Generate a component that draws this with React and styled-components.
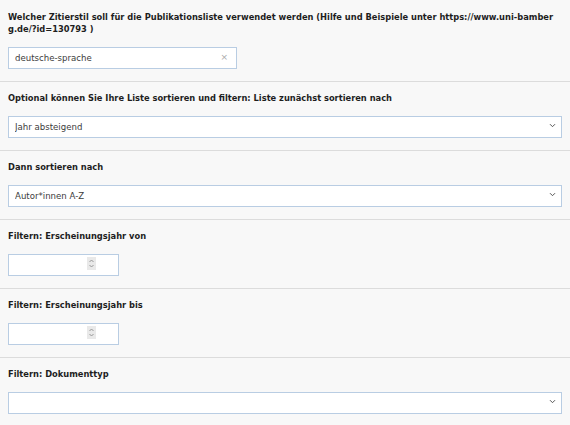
import React from "react"
import styled, { createGlobalStyle } from "styled-components"

const GlobalStyle = createGlobalStyle`
  html, body {
    margin: 0;
    padding: 0;
    background: #f8f8f8;
  }
  body {
    font-family: "DejaVu Sans", Verdana, sans-serif;
    color: #333;
  }
`

const Form = styled.div`
  width: 570px;
  background: #f8f8f8;
`

const Section = styled.div`
  padding: 10px 8px 13px;
  border-bottom: 1px solid #dcdcdc;

  &:first-child {
    padding-top: 11px;
  }

  &:last-child {
    border-bottom: none;
  }
`

const Label = styled.div`
  font-size: 8.3px;
  font-weight: bold;
  line-height: 12px;
  color: #1e1e1e;
  margin-bottom: 11px;
  word-break: break-all;
`

const FieldWrap = styled.div`
  position: relative;
  width: ${({ $width }) => $width || "100%"};
  height: 22px;
  box-sizing: border-box;
`

const Field = styled.input`
  box-sizing: border-box;
  width: 100%;
  height: 22px;
  border: 1px solid #b9cde3;
  background: #fff;
  font-family: "DejaVu Sans", Verdana, sans-serif;
  font-size: 8.6px;
  color: #3c3c3c;
  padding: 0 22px 0 6px;
  margin: 0;
  outline: none;
  border-radius: 0;
  appearance: none;
  -moz-appearance: textfield;

  &::-webkit-inner-spin-button,
  &::-webkit-outer-spin-button {
    -webkit-appearance: none;
    margin: 0;
  }
`

const Select = styled.select`
  box-sizing: border-box;
  width: 100%;
  height: 22px;
  border: 1px solid #b9cde3;
  background: #fff;
  font-family: "DejaVu Sans", Verdana, sans-serif;
  font-size: 8.6px;
  color: #3c3c3c;
  padding: 0 22px 0 6px;
  margin: 0;
  outline: none;
  border-radius: 0;
  appearance: none;
`

const Clear = styled.span`
  position: absolute;
  right: 9px;
  top: 50%;
  transform: translateY(-50%);
  color: #aaa;
  font-size: 9px;
  line-height: 1;
`

const Chevron = styled.svg`
  position: absolute;
  right: 6px;
  top: 50%;
  margin-top: -3px;
  width: 7px;
  height: 5px;
  pointer-events: none;
`

const Spinner = styled.span`
  position: absolute;
  left: 79px;
  top: 4px;
  width: 9px;
  height: 13px;
  background: #e9e9e9;
  display: flex;
  align-items: center;
  justify-content: center;
`

const ChevronDown = () => (
  <Chevron viewBox="0 0 7 5">
    <path d="M1 1.2 L3.5 3.7 L6 1.2" fill="none" stroke="#555" strokeWidth="1" />
  </Chevron>
)

const NumberField = () => (
  <FieldWrap $width="111px">
    <Field type="number" />
    <Spinner>
      <svg width="7" height="11" viewBox="0 0 7 11">
        <path d="M1.5 4 L3.5 2 L5.5 4" fill="none" stroke="#8e8e8e" strokeWidth="0.9" />
        <path d="M1.5 7 L3.5 9 L5.5 7" fill="none" stroke="#8e8e8e" strokeWidth="0.9" />
      </svg>
    </Spinner>
  </FieldWrap>
)

const SelectField = ({ value }) => (
  <FieldWrap>
    <Select defaultValue={value}>
      <option value={value}>{value}</option>
    </Select>
    <ChevronDown />
  </FieldWrap>
)

const App = () => {
  return (
    <Form>
      <GlobalStyle />
      <Section>
        <Label>
          Welcher Zitierstil soll für die Publikationsliste verwendet werden (Hilfe und Beispiele unter https://www.uni-bamberg.de/?id=130793 )
        </Label>
        <FieldWrap $width="229px">
          <Field type="text" defaultValue="deutsche-sprache" />
          <Clear>×</Clear>
        </FieldWrap>
      </Section>
      <Section>
        <Label>Optional können Sie Ihre Liste sortieren und filtern: Liste zunächst sortieren nach</Label>
        <SelectField value="Jahr absteigend" />
      </Section>
      <Section>
        <Label>Dann sortieren nach</Label>
        <SelectField value="Autor*innen A-Z" />
      </Section>
      <Section>
        <Label>Filtern: Erscheinungsjahr von</Label>
        <NumberField />
      </Section>
      <Section>
        <Label>Filtern: Erscheinungsjahr bis</Label>
        <NumberField />
      </Section>
      <Section>
        <Label>Filtern: Dokumenttyp</Label>
        <SelectField value="" />
      </Section>
    </Form>
  )
}

export default App
